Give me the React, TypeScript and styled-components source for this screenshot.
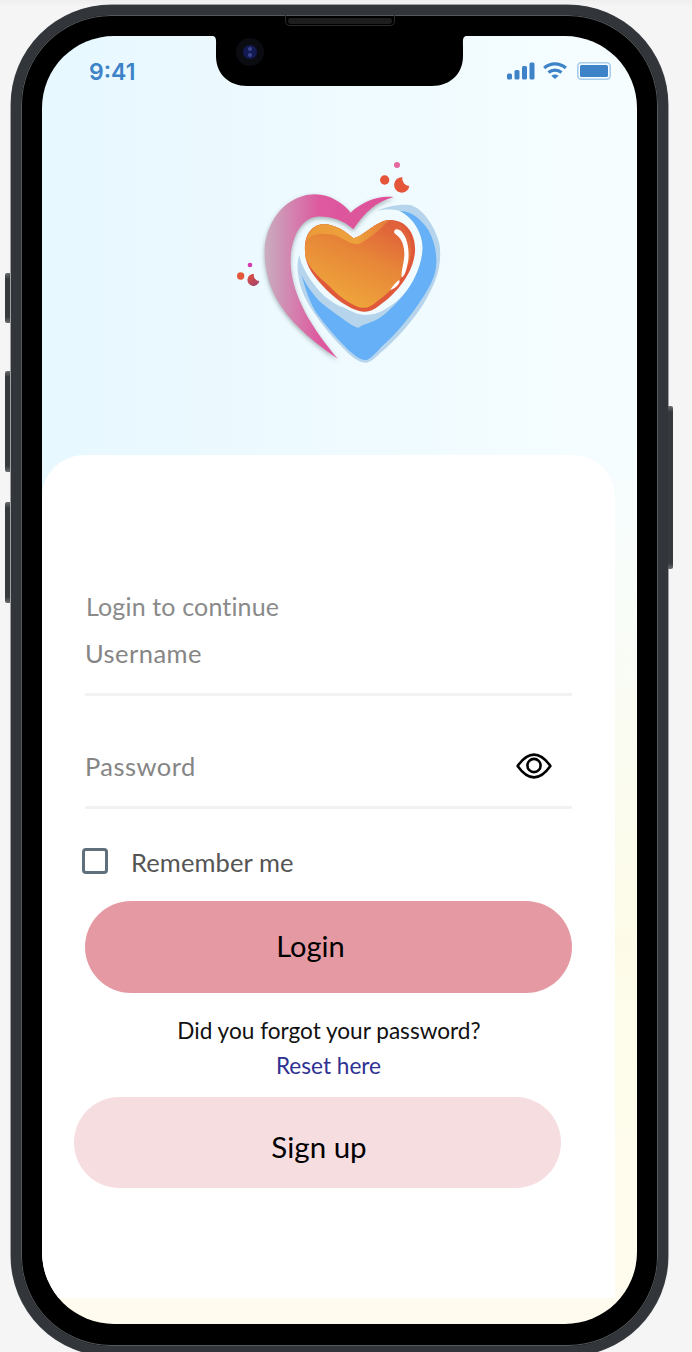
import React from "react";
import styled, { createGlobalStyle } from "styled-components";

const Global = createGlobalStyle`
  html, body { margin: 0; padding: 0; height: 1352px; overflow: hidden; }
  body {
    background: linear-gradient(#eeeeee 0, #f5f5f5 6px);
    font-family: "Lato", "Open Sans", sans-serif;
  }
  * { box-sizing: border-box; }
`;

const Stage = styled.div`
  width: 692px;
  height: 1352px;
  padding: 5px 0 0 11px;
  overflow: hidden;
`;

const Phone = styled.div`
  position: relative;
  width: 657px;
  height: 1351px;
  padding: 21px;
  background: #000;
  border: 10px solid #32363a;
  border-radius: 100px;
  box-shadow: inset 0 0 0 1px #56595c, 0 0 0 0.5px #4a4d50;
`;

const SideButton = styled.div<{ $top: number; $height: number; $right?: boolean }>`
  position: absolute;
  top: ${(p) => p.$top - 15}px;
  ${(p) => (p.$right ? "right: -15px;" : "left: -16px;")}
  width: 5px;
  height: ${(p) => p.$height}px;
  background: linear-gradient(#6a6d70 0, #36393c 6px, #36393c calc(100% - 6px), #6a6d70 100%);
  border-radius: ${(p) => (p.$right ? "0 2px 2px 0" : "2px 0 0 2px")};
`;

const Speaker = styled.div`
  position: absolute;
  top: 0;
  left: 264px;
  width: 110px;
  height: 11px;
  padding: 3px 2px 0;
  border: 1px solid #2a2a2a;
  border-top: none;
  border-radius: 0 0 5px 5px;
`;

const SpeakerGrill = styled.div`
  height: 6px;
  background: #1d1d1d;
  border-radius: 3px;
`;

const Screen = styled.div`
  position: relative;
  display: flex;
  flex-direction: column;
  width: 595px;
  height: 1288px;
  overflow: hidden;
  border-radius: 72px;
  background:
    linear-gradient(to bottom, rgba(255, 252, 232, 0) 32%, #fdfbe8 70%, #fffcef 100%),
    linear-gradient(to right, #e7f8ff, #f6fdff);
`;

const Notch = styled.svg`
  position: absolute;
  top: 0;
  left: 170px;
`;

const StatusBar = styled.div`
  flex: none;
  display: flex;
  align-items: center;
  justify-content: space-between;
  height: 70px;
  padding: 0 26px 0 47px;
`;

const Time = styled.span`
  margin-top: 2px;
  font-family: "Inter", sans-serif;
  font-size: 23px;
  font-weight: 600;
  color: #3e83c8;
`;

const StatusIcons = styled.div`
  display: flex;
  align-items: center;
  gap: 8px;
`;

const LogoArea = styled.div`
  flex: none;
  height: 349px;
  padding: 34px 0 0 158px;
`;

const Card = styled.div`
  flex: none;
  display: flex;
  flex-direction: column;
  width: 573px;
  height: 843px;
  padding: 134px 43px 0;
  background: #fff;
  border-radius: 42px 42px 0 0;
`;

const Heading = styled.div`
  margin-left: 1px;
  font-size: 25px;
  letter-spacing: 0.15px;
  line-height: 34px;
  color: #8a8a8a;
`;

const Field = styled.div<{ $gap: number; $pad: number }>`
  display: flex;
  justify-content: space-between;
  align-items: center;
  margin-top: ${(p) => p.$gap}px;
  padding: 0 20px ${(p) => p.$pad}px 0;
  border-bottom: 3px solid #f2f2f2;
`;

const Placeholder = styled.span`
  font-size: 25.5px;
  letter-spacing: 0.45px;
  line-height: 34px;
  color: #858585;
`;

const EyeIcon = styled.svg`
  display: block;
`;

const RememberRow = styled.label`
  display: flex;
  align-items: center;
  gap: 23px;
  margin: 39px 0 0 -3px;
  height: 26px;
`;

const Box = styled.span`
  width: 26px;
  height: 26px;
  border: 3px solid #5f707c;
  border-radius: 4px;
`;

const RememberText = styled.span`
  margin-top: 2px;
  font-size: 25.5px;
  letter-spacing: 0.1px;
  line-height: 30px;
  color: #555;
`;

const Pill = styled.button<{
  $bg: string;
  $size: number;
  $height: number;
  $shift: number;
  $top: number;
  $pad: string;
}>`
  display: flex;
  align-items: center;
  justify-content: center;
  flex: none;
  width: 487px;
  height: ${(p) => p.$height}px;
  margin: ${(p) => p.$top}px 0 0 ${(p) => p.$shift}px;
  padding: ${(p) => p.$pad};
  border: none;
  border-radius: 46px;
  background: ${(p) => p.$bg};
  color: #000;
  font-family: inherit;
  font-size: ${(p) => p.$size}px;
`;

const Hint = styled.div`
  margin: 23px 0 0 1px;
  text-align: center;
  font-size: 22.6px;
  line-height: 30px;
  color: #111;
`;

const ResetLink = styled.a`
  display: block;
  margin-top: 5px;
  text-align: center;
  font-size: 22.6px;
  line-height: 30px;
  color: #2e3192;
`;

const Logo = () => (
  <svg width={260} height={240} viewBox="0 0 780 720">
    <defs>
      <linearGradient id="pk" x1="0" x2="1" y1="0" y2="0">
        <stop offset="0" stopColor="#c9adc0" />
        <stop offset="0.42" stopColor="#dd5a9f" />
        <stop offset="1" stopColor="#dd4f97" />
      </linearGradient>
      <linearGradient id="or" x1="0.42" y1="0.95" x2="0.88" y2="0.1">
        <stop offset="0" stopColor="#eea43b" />
        <stop offset="0.55" stopColor="#e78638" />
        <stop offset="1" stopColor="#e0613a" />
      </linearGradient>
      <linearGradient id="band" x1="0" x2="1" y1="0" y2="0">
        <stop offset="0" stopColor="#ec9a39" />
        <stop offset="0.6" stopColor="#eda23c" />
        <stop offset="1" stopColor="#e4783a" />
      </linearGradient>
      <linearGradient id="cr" x1="0" y1="0" x2="0.6" y2="1">
        <stop offset="0" stopColor="#e4503a" />
        <stop offset="1" stopColor="#a84568" />
      </linearGradient>
      <filter id="sh" x="-20%" y="-20%" width="140%" height="140%">
        <feDropShadow dx="0" dy="6" stdDeviation="6" floodColor="#4f5f64" floodOpacity="0.5" />
      </filter>
    </defs>
    <path
      filter="url(#sh)"
      fill="url(#pk)"
      d="M413 656 C340 605 262 545 222 462 C192 400 188 325 200 288 C225 200 290 163 345 163 C390 163 430 190 452 218 C480 190 530 165 581 171 C530 185 495 215 460 268 C430 240 390 228 350 230 C300 235 270 300 272 370 C275 470 340 570 413 656 Z"
    />
    <path
      fill="#b6d5ec"
      d="M532 213 C560 198 600 192 630 195 C670 205 705 260 718 310 C726 355 715 405 700 435 C680 480 660 510 640 535 C610 575 570 615 540 640 C525 655 510 668 498 668 C480 668 460 655 440 635 C400 595 370 560 340 515 C315 480 298 440 294 400 C291 380 293 360 298 345 C302 370 320 410 360 455 C385 480 410 495 430 502 C455 515 475 525 495 525 C525 525 545 515 560 505 C585 490 600 475 610 465 C640 430 665 380 668 325 C668 290 650 240 600 213 C575 207 555 208 532 213 Z"
    />
    <path
      fill="#65b0f6"
      d="M600 213 C635 212 665 240 685 270 C705 305 712 345 708 380 C704 420 680 455 660 485 C630 530 590 580 550 615 C530 635 510 660 498 660 C485 662 465 650 440 625 C405 590 375 555 350 520 C330 490 315 445 305 405 C320 440 345 470 360 485 C385 505 405 520 420 530 C440 545 460 560 475 563 C490 552 515 548 540 533 C560 520 590 490 610 465 C640 430 665 380 668 325 C668 290 650 240 600 213 Z"
    />
    <path
      fill="#e0583a"
      d="M460 295 C490 290 530 240 570 240 C625 240 648 290 645 335 C640 400 590 460 540 495 C520 510 510 515 495 515 C470 518 420 490 380 450 C340 410 315 375 315 335 C312 280 340 253 370 253 C410 253 440 278 460 295 Z"
    />
    <path
      fill="url(#or)"
      d="M460 295 C490 290 530 240 570 240 C612 242 636 290 634 335 C628 395 580 450 530 485 C515 497 505 503 492 503 C470 505 425 478 390 440 C350 405 315 375 315 335 C312 280 340 253 370 253 C410 253 440 278 460 295 Z"
    />
    <path
      fill="url(#band)"
      d="M321 300 C328 270 348 253 370 253 C410 253 440 278 460 295 C490 290 530 240 570 240 C550 255 530 285 475 313 C440 312 420 285 390 283 C365 280 340 278 321 300 Z"
    />
    <path
      fill="#fff"
      d="M583 272 C590 262 605 270 612 285 C625 305 630 345 622 375 C618 395 612 410 605 412 C603 395 612 370 613 345 C614 320 605 295 590 285 C585 282 580 278 583 272 Z"
    />
    <path fill="#fff" d="M570 450 C578 440 588 425 598 420 C602 428 590 445 570 450 Z" />
    <circle cx="591" cy="75" r="9" fill="#e5679f" />
    <circle cx="554" cy="120" r="14" fill="#e4553a" />
    <path fill="#e4553a" d="M607 112 A23 23 0 1 0 628 138 A22 22 0 0 1 607 112 Z" />
    <circle cx="150" cy="375" r="7" fill="#d03cb0" />
    <circle cx="122" cy="408" r="11" fill="#e4583a" />
    <path fill="url(#cr)" d="M162 402 A18 18 0 1 0 178 423 A17 17 0 0 1 162 402 Z" />
  </svg>
);

export default function App() {
  return (
    <>
      <Global />
      <Stage>
        <Phone>
          <SideButton $top={273} $height={50} />
          <SideButton $top={371} $height={101} />
          <SideButton $top={502} $height={101} />
          <SideButton $top={406} $height={163} $right />
          <Speaker>
            <SpeakerGrill />
          </Speaker>
          <Screen>
            <Notch width={255} height={50} viewBox="0 0 255 50">
              <path d="M0 0 H255 C250 0 251 5 251 12 V20 C251 38 238 50 220 50 H35 C17 50 4 38 4 20 V12 C4 5 5 0 0 0 Z" fill="#000" />
              <circle cx="38" cy="16" r="14" fill="#0b0b12" />
              <circle cx="38" cy="16" r="7" fill="#141a52" />
              <circle cx="38" cy="13" r="2" fill="#3b4590" />
              <circle cx="38" cy="19" r="2" fill="#3b4590" />
            </Notch>
            <StatusBar>
              <Time>9:41</Time>
              <StatusIcons>
                <svg width={28} height={18} viewBox="0 0 28 18" fill="#3e83c8">
                  <rect x="0" y="11.5" width="5" height="6" rx="1.5" />
                  <rect x="7.5" y="8" width="5" height="9.5" rx="1.5" />
                  <rect x="15" y="4" width="5" height="13.5" rx="1.5" />
                  <rect x="22.5" y="0.5" width="5" height="17" rx="1.5" />
                </svg>
                <svg width={26} height={18} viewBox="0 0 26 18" fill="none" stroke="#3e83c8" strokeWidth="3.2">
                  <path d="M1.2 6 C7.5 0.5 16.5 0.5 22.8 6" />
                  <path d="M5.5 10.5 C9.2 7.2 14.8 7.2 18.5 10.5" />
                  <path d="M12 17 L8.3 13.8 C10.5 12.2 13.5 12.2 15.7 13.8 Z" fill="#3e83c8" stroke="none" />
                </svg>
                <svg width={34} height={18} viewBox="0 0 34 18">
                  <rect x="0.8" y="0.8" width="32.4" height="16.4" rx="3.5" fill="none" stroke="#a9cdec" strokeWidth="1.6" />
                  <rect x="3" y="3" width="28" height="12" rx="1.6" fill="#3e83c8" />
                </svg>
              </StatusIcons>
            </StatusBar>
            <LogoArea>
              <Logo />
            </LogoArea>
            <Card>
              <Heading>Login to continue</Heading>
              <Field $gap={13} $pad={23}>
                <Placeholder>Username</Placeholder>
              </Field>
              <Field $gap={53} $pad={23}>
                <Placeholder>Password</Placeholder>
                <EyeIcon width={36} height={26} viewBox="0 0 36 26" fill="none" stroke="#000" strokeWidth="2.6">
                  <path d="M1.6 13 C8 4 13 1.6 18 1.6 C23 1.6 28 4 34.4 13 C28 22 23 24.4 18 24.4 C13 24.4 8 22 1.6 13 Z" strokeLinejoin="round" />
                  <circle cx="18" cy="12.5" r="6.6" />
                </EyeIcon>
              </Field>
              <RememberRow>
                <Box />
                <RememberText>Remember me</RememberText>
              </RememberRow>
              <Pill $bg="#e59aa3" $size={29} $height={92} $shift={0} $top={27} $pad="0 36px 4px 0">
                Login
              </Pill>
              <Hint>Did you forgot your password?</Hint>
              <ResetLink>Reset here</ResetLink>
              <Pill $bg="#f6dde0" $size={29.5} $height={91} $shift={-11} $top={16} $pad="7px 0 0 3px">
                Sign up
              </Pill>
            </Card>
          </Screen>
        </Phone>
      </Stage>
    </>
  );
}
